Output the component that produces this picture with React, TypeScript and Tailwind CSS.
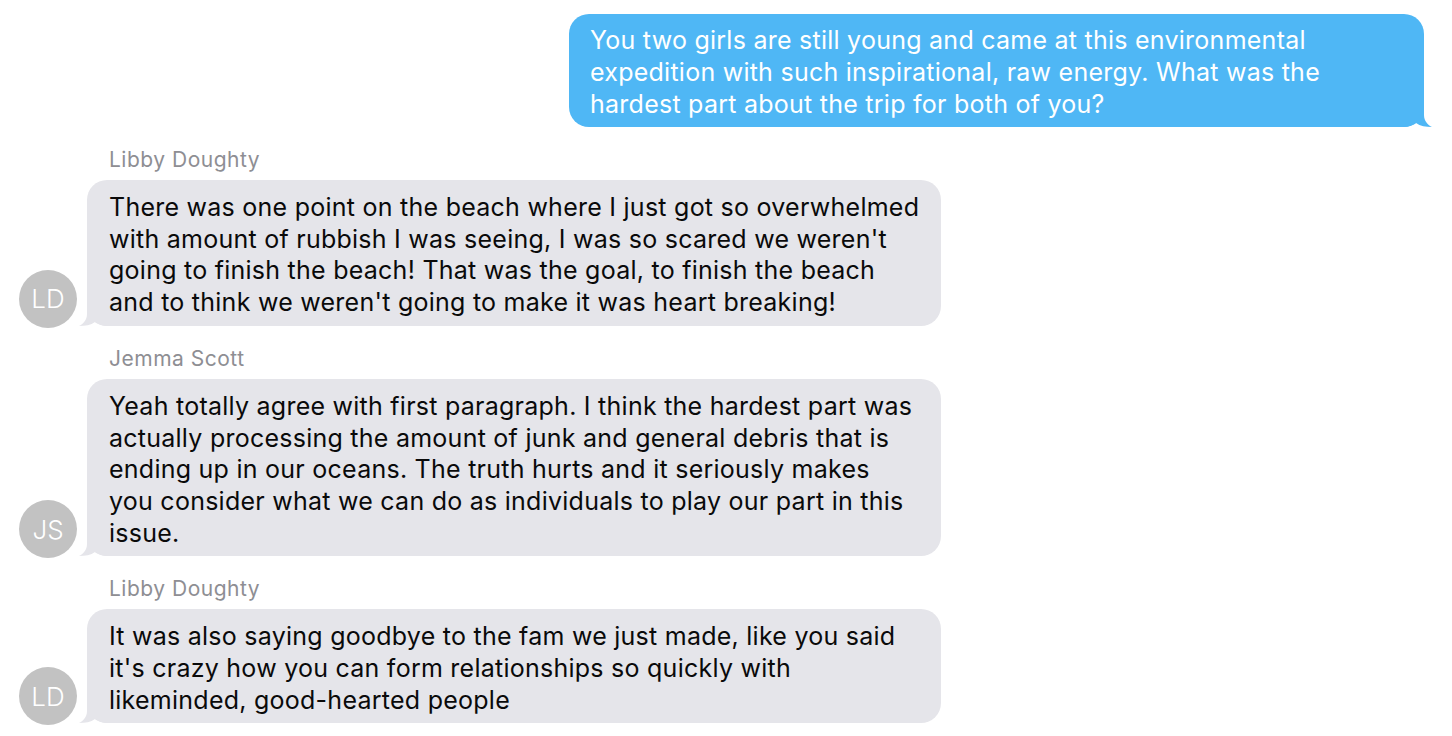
import React from "react";

type Msg = {
  name: string;
  initials: string;
  lines: string[];
};

const incoming: Msg[] = [
  {
    name: "Libby Doughty",
    initials: "LD",
    lines: [
      "There was one point on the beach where I just got so overwhelmed",
      "with amount of rubbish I was seeing, I was so scared we weren't",
      "going to finish the beach! That was the goal, to finish the beach",
      "and to think we weren't going to make it was heart breaking!",
    ],
  },
  {
    name: "Jemma Scott",
    initials: "JS",
    lines: [
      "Yeah totally agree with first paragraph. I think the hardest part was",
      "actually processing the amount of junk and general debris that is",
      "ending up in our oceans. The truth hurts and it seriously makes",
      "you consider what we can do as individuals to play our part in this",
      "issue.",
    ],
  },
  {
    name: "Libby Doughty",
    initials: "LD",
    lines: [
      "It was also saying goodbye to the fam we just made, like you said",
      "it's crazy how you can form relationships so quickly with",
      "likeminded, good-hearted people",
    ],
  },
];

const question = [
  "You two girls are still young and came at this environmental",
  "expedition with such inspirational, raw energy. What was the",
  "hardest part about the trip for both of you?",
];

function TailLeft() {
  return (
    <svg
      width="30"
      height="22"
      viewBox="0 0 30 22"
      className="absolute bottom-0 -left-2"
    >
      <path
        d="M8 0 L8 10 C8 16 4 20 0 22 C6 22 12 21 16 18 C19 20 24 22 30 22 L30 0 Z"
        fill="#e5e5ea"
      />
    </svg>
  );
}

function TailRight() {
  return (
    <svg
      width="30"
      height="22"
      viewBox="0 0 30 22"
      className="absolute bottom-0 -right-2"
    >
      <path
        d="M22 0 L22 10 C22 16 26 20 30 22 C24 22 18 21 14 18 C11 20 6 22 0 22 L0 0 Z"
        fill="#4fb7f5"
      />
    </svg>
  );
}

export default function App() {
  return (
    <div
      className="w-[1452px] h-[736px] bg-white overflow-hidden"
      style={{ fontFamily: 'Inter, "Liberation Sans", Arial, sans-serif' }}
    >
      {/* OUTGOING */}
      <div className="flex justify-end pt-[14px] pr-[28px]">
        <div className="relative w-[855px] rounded-[20px] bg-[#4fb7f5] pl-[21px] pr-4 pt-[10px] pb-[7px] text-white text-[25px] leading-[32px] tracking-[0.25px]">
          <TailRight />
          <div className="relative">
            {question.map((l, i) => (
              <div key={i} className="whitespace-nowrap">
                {l}
              </div>
            ))}
          </div>
        </div>
      </div>

      {/* INCOMING */}
      <div className="flex flex-col gap-[21px] pt-[21px]">
        {incoming.map((m, i) => (
          <div key={i} className="flex flex-col">
            <div className="pl-[109px] mb-2 text-[21px] leading-[24px] tracking-[0.5px] text-[#8e8e93]">
              {m.name}
            </div>
            <div className="flex items-end gap-[10px] pl-[19px]">
              <div className="w-[58px] h-[58px] -mb-[2px] rounded-full bg-[#c2c2c2] flex items-center justify-center text-white text-[26px] font-light shrink-0">
                {m.initials}
              </div>
              <div className="relative w-[854px] rounded-[20px] bg-[#e5e5ea] pl-[22px] pr-4 pt-[12px] pb-[7px] text-[#0a0a0a] text-[25px] leading-[31.7px] tracking-[0.25px]">
                <TailLeft />
                <div className="relative">
                  {m.lines.map((l, j) => (
                    <div key={j} className="whitespace-nowrap">
                      {l}
                    </div>
                  ))}
                </div>
              </div>
            </div>
          </div>
        ))}
      </div>
    </div>
  );
}
